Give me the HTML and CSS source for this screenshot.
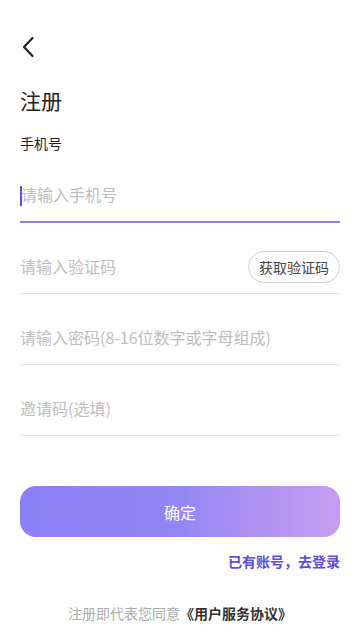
FILE: index.html
```html
<!DOCTYPE html>
<html lang="zh-CN">
  <head>
    <meta charset="UTF-8" />
    <meta name="viewport" content="width=device-width, initial-scale=1.0" />
    <title>注册</title>
    <link rel="stylesheet" href="styles.css">
  </head>
  <body>
    <div class="page">
      <div class="topbar">
        <svg class="back" width="14" height="22" viewBox="0 0 14 22">
          <path d="M11.5 2 L3 11 L11.5 20" fill="none" stroke="#222" stroke-width="2.2" stroke-linecap="round" stroke-linejoin="round" />
        </svg>
      </div>
      <h1 class="title">注册</h1>
      <div class="label">手机号</div>

      <div class="field active">
        <span class="caret"></span>
        <input class="input" placeholder="请输入手机号" />
      </div>
      <div class="field">
        <input class="input" placeholder="请输入验证码" />
        <button class="codeBtn">获取验证码</button>
      </div>
      <div class="field">
        <input class="input" placeholder="请输入密码(8-16位数字或字母组成)" />
      </div>
      <div class="field">
        <input class="input" placeholder="邀请码(选填)" />
      </div>

      <button class="submit">确定</button>
      <div class="login">已有账号，去登录</div>

      <div class="agree">注册即代表您同意<b>《用户服务协议》</b></div>
    </div>
  </body>
</html>
```

FILE: styles.css
```css
body {
  margin: 0;
  background: #fff;
  font-family: "Noto Sans CJK SC", "Noto Sans", sans-serif;
  color: #222;
}
.page {
  width: 360px;
  height: 639px;
  padding: 0 20px;
  box-sizing: border-box;
}
.topbar {
  padding-top: 36px;
  height: 22px;
}
.back {
  display: block;
  margin-left: 1px;
}
.title {
  margin: 28px 0 0 0;
  font-size: 21px;
  line-height: 28px;
  font-weight: normal;
  color: #222;
}
.label {
  margin-top: 20px;
  font-size: 14px;
  line-height: 18px;
  color: #222;
}
.field {
  display: flex;
  align-items: center;
  height: 52px;
  margin-top: 18px;
  border-bottom: 1px solid #e3e3e3;
}
.field:first-of-type {
  margin-top: 17px;
}
.field.active {
  height: 51px;
  border-bottom: 2px solid #8a82ea;
}
.caret {
  width: 2px;
  height: 20px;
  margin-right: -1px;
  background: #5b4de0;
}
.input {
  flex: 1;
  min-width: 0;
  border: none;
  outline: none;
  padding: 0;
  margin-top: -3px;
  background: transparent;
  font-family: inherit;
  font-size: 16px;
  color: #222;
}
.input::placeholder {
  color: #bdbdbd;
}
.codeBtn {
  height: 32px;
  padding: 0 10px;
  border: 1px solid #cfcfcf;
  border-radius: 16px;
  background: #fff;
  font-family: inherit;
  font-size: 14px;
  color: #444;
}
.submit {
  display: block;
  width: 100%;
  height: 51px;
  margin-top: 50px;
  border: none;
  border-radius: 16px;
  background: linear-gradient(to right, #8a80f4 0%, #8f85f4 45%, #c79df1 100%);
  font-family: inherit;
  font-size: 16px;
  color: #fff;
}
.login {
  margin-top: 14px;
  text-align: right;
  font-size: 14px;
  line-height: 20px;
  font-weight: bold;
  color: #5a4ee0;
}
.agree {
  margin-top: 33px;
  text-align: center;
  font-size: 14px;
  line-height: 18px;
  color: #ababab;
}
.agree b {
  color: #333;
}
```
